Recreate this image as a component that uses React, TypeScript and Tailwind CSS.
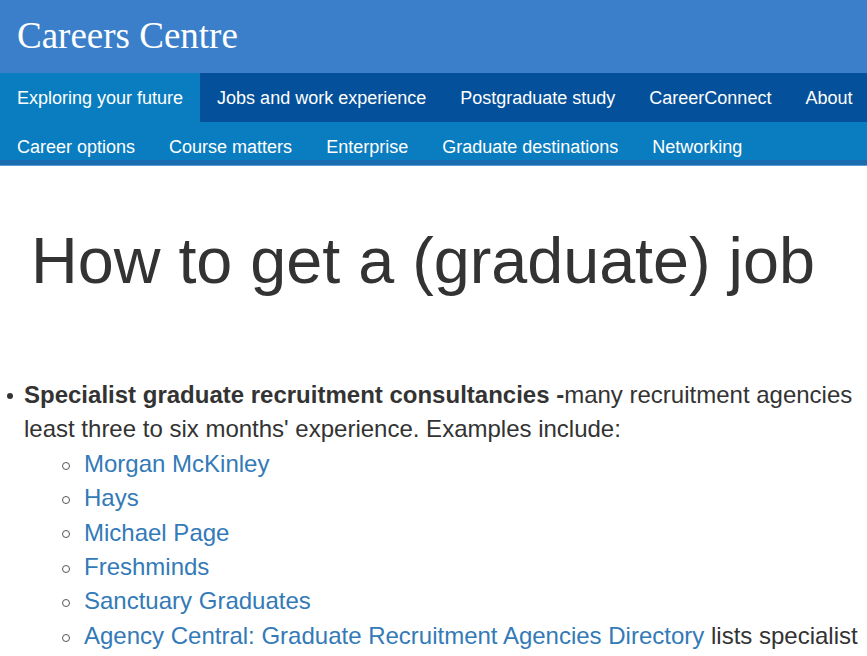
import React from "react";

const row1 = [
  { t: "Exploring your future", active: true },
  { t: "Jobs and work experience" },
  { t: "Postgraduate study" },
  { t: "CareerConnect" },
  { t: "About" },
];
const row2 = ["Career options", "Course matters", "Enterprise", "Graduate destinations", "Networking"];
const links = ["Morgan McKinley", "Hays", "Michael Page", "Freshminds", "Sanctuary Graduates"];

function Circle() {
  return (
    <span className="w-[22px] shrink-0 flex">
      <span className="w-[8px] h-[8px] rounded-full border-[1.5px] border-[#555] mt-[3px]" />
    </span>
  );
}

export default function App() {
  return (
    <div className="w-[867px] h-[656px] overflow-hidden bg-white" style={{ fontFamily: '"Liberation Sans", Arial, sans-serif' }}>
      <header>
        <div className="h-[73px] bg-[#3b7fcb] flex items-center pl-[17px]">
          <span className="text-white text-[37px] leading-none -mt-[2px]" style={{ fontFamily: '"Liberation Serif", Georgia, serif' }}>
            Careers Centre
          </span>
        </div>
        <nav className="h-[49px] bg-[#04509a] flex">
          {row1.map((i) => (
            <a key={i.t} className={`px-[17px] flex items-center text-white text-[18px] whitespace-nowrap pt-[2px] ${i.active ? "bg-[#0a7dc0]" : ""}`}>
              {i.t}
            </a>
          ))}
        </nav>
        <nav className="h-[38px] bg-[#0a7dc0] flex">
          {row2.map((t) => (
            <a key={t} className="px-[17px] flex items-center text-white text-[18px] whitespace-nowrap pt-[12px]">
              {t}
            </a>
          ))}
        </nav>
        <div className="h-[6px] bg-[#1a6cb0] border-b border-[#5c9ad4]" />
      </header>
      <main className="text-[#333333]">
        <h1 className="ml-[31px] mt-[55px] text-[64.7px] leading-[80px] whitespace-nowrap">How to get a (graduate) job</h1>
        <ul className="mt-[77px] text-[24px] leading-[34.4px]">
          <li className="flex">
            <span className="w-[24px] shrink-0 flex justify-start pl-[7px] pt-[15px]">
              <span className="w-[6px] h-[6px] rounded-full bg-[#333]" />
            </span>
            <div>
              <div className="whitespace-nowrap">
                <b>Specialist graduate recruitment consultancies -</b>many recruitment agencies
              </div>
              <div className="whitespace-nowrap">least three to six months' experience. Examples include:</div>
              <ul className="ml-[38px]">
                {links.map((l) => (
                  <li key={l} className="flex items-center whitespace-nowrap">
                    <Circle />
                    <a className="text-[#337ab7]">{l}</a>
                  </li>
                ))}
                <li className="flex items-center whitespace-nowrap">
                  <Circle />
                  <span>
                    <a className="text-[#337ab7]">Agency Central: Graduate Recruitment Agencies Directory</a> lists specialist
                  </span>
                </li>
              </ul>
            </div>
          </li>
        </ul>
      </main>
    </div>
  );
}
